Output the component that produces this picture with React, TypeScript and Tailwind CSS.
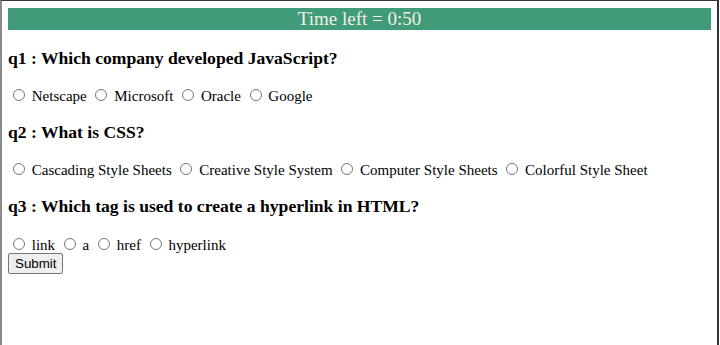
import React, { useState } from "react";

const questions = [
  {
    id: "q1",
    text: "Which company developed JavaScript?",
    options: ["Netscape", "Microsoft", "Oracle", "Google"],
  },
  {
    id: "q2",
    text: "What is CSS?",
    options: [
      "Cascading Style Sheets",
      "Creative Style System",
      "Computer Style Sheets",
      "Colorful Style Sheet",
    ],
  },
  {
    id: "q3",
    text: "Which tag is used to create a hyperlink in HTML?",
    options: ["link", "a", "href", "hyperlink"],
  },
];

export default function App() {
  const [answers, setAnswers] = useState<Record<string, string>>({});

  return (
    <div className="h-[345px] w-[720px] overflow-hidden bg-white pr-px">
      <div className="h-full border-t border-l-2 border-r-2 border-t-[#3a3a3a] border-l-[#8a8a8a] border-r-[#333] bg-white font-['Liberation_Serif',serif] text-[15px] leading-[normal] text-black">
        <div className="px-[6px] pt-[7px]">
          <div className="bg-[#409c78] text-center text-[19px] leading-[22px] text-[#f3ede4]">
            Time left = 0:50
          </div>

          <form onSubmit={(e) => e.preventDefault()}>
            {questions.map((q) => (
              <div key={q.id}>
                <h3 className="my-[17.6px] text-[17.6px] font-bold leading-[normal]">
                  {q.id} : {q.text}
                </h3>
                <div className="h-[18px] leading-[normal]">
                  {q.options.map((opt) => (
                    <React.Fragment key={opt}>
                      <input
                        type="radio"
                        name={q.id}
                        value={opt}
                        checked={answers[q.id] === opt}
                        onChange={() => setAnswers({ ...answers, [q.id]: opt })}
                        className="ml-[5px] mr-[3px] mt-[3px] size-[12px] align-baseline"
                      />{" "}
                      <label>{opt}</label>{" "}
                    </React.Fragment>
                  ))}
                </div>
              </div>
            ))}
            <button
              type="submit"
              className="rounded-[2px] border border-[#767676] bg-[#efefef] px-[6px] py-[2px] font-['Liberation_Sans',sans-serif] text-[13.33px] leading-[normal] text-black"
            >
              Submit
            </button>
          </form>
        </div>
      </div>
    </div>
  );
}
